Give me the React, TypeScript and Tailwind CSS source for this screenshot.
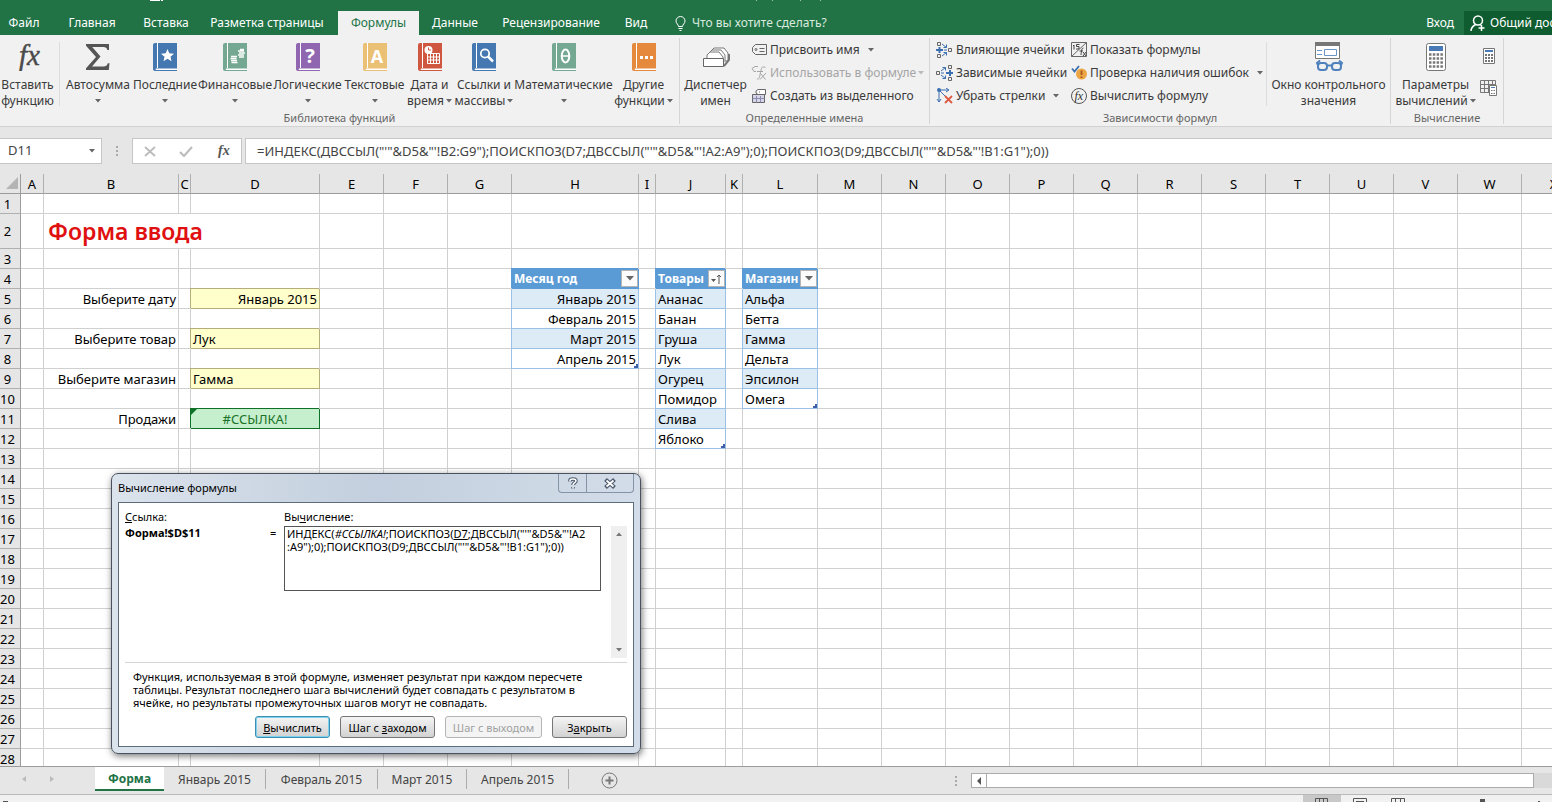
import { useState, type ReactNode } from "react";

const FORMULA =
  "=ИНДЕКС(ДВССЫЛ(\"'\"&D5&\"'!B2:G9\");ПОИСКПОЗ(D7;ДВССЫЛ(\"'\"&D5&\"'!A2:A9\");0);ПОИСКПОЗ(D9;ДВССЫЛ(\"'\"&D5&\"'!B1:G1\");0))";

const tabs = [
  { label: "Файл", width: "w-12" },
  { label: "Главная", width: "w-[88px]" },
  { label: "Вставка", width: "w-[60px]" },
  { label: "Разметка страницы", width: "w-[142px]" },
  { label: "Формулы", width: "w-[81px]" },
  { label: "Данные", width: "w-[72px]" },
  { label: "Рецензирование", width: "w-[120px]" },
  { label: "Вид", width: "w-[50px]" },
];

const columns = [
  { name: "A", width: 23 },
  { name: "B", width: 135 },
  { name: "C", width: 12 },
  { name: "D", width: 129 },
  { name: "E", width: 64 },
  { name: "F", width: 64 },
  { name: "G", width: 64 },
  { name: "H", width: 127 },
  { name: "I", width: 17 },
  { name: "J", width: 70 },
  { name: "K", width: 17 },
  { name: "L", width: 75 },
  ..."MNOPQRSTUVWXYZ".split("").map((name) => ({ name, width: 64 })),
];

const ROWS = 40;

interface Cell {
  text: string;
  kind: "label" | "input" | "inputRight" | "result" | "head" | "odd" | "even";
  right?: boolean;
  last?: boolean;
  sorted?: boolean;
}

const cells: Record<string, Cell> = {
  B5: { text: "Выберите дату", kind: "label" },
  B7: { text: "Выберите товар", kind: "label" },
  B9: { text: "Выберите магазин", kind: "label" },
  B11: { text: "Продажи", kind: "label" },
  D5: { text: "Январь 2015", kind: "inputRight" },
  D7: { text: "Лук", kind: "input" },
  D9: { text: "Гамма", kind: "input" },
  D11: { text: "#ССЫЛКА!", kind: "result" },
};

// Adds a formatted list (header + banded rows) starting at row 4
const addList = (col: string, head: string, items: string[], right = false) => {
  cells[`${col}4`] = { text: head, kind: "head", sorted: col === "J" };
  items.forEach((text, i) => {
    cells[`${col}${i + 5}`] = {
      text,
      kind: i % 2 === 0 ? "odd" : "even",
      right,
      last: i === items.length - 1,
    };
  });
};

addList("H", "Месяц год", ["Январь 2015", "Февраль 2015", "Март 2015", "Апрель 2015"], true);
addList("J", "Товары", ["Ананас", "Банан", "Груша", "Лук", "Огурец", "Помидор", "Слива", "Яблоко"]);
addList("L", "Магазин", ["Альфа", "Бетта", "Гамма", "Дельта", "Эпсилон", "Омега"]);

const kindClass: Record<Cell["kind"], string> = {
  label: "border-[#d0d0d0] text-right",
  input: "border-[#b5ae7c] bg-[#ffffcc] shadow-[-1px_-1px_0_#b5ae7c]",
  inputRight: "border-[#b5ae7c] bg-[#ffffcc] text-right shadow-[-1px_-1px_0_#b5ae7c]",
  result:
    "border-[#0f7028] bg-[#c6efce] text-center text-[#1b7328] shadow-[-1px_-1px_0_#0f7028]",
  head: "border-[#5b9bd5] bg-[#5b9bd5] text-[12px] font-bold text-white shadow-[-1px_-1px_0_#5b9bd5]",
  odd: "border-[#9bc2e6] bg-[#ddebf7] shadow-[-1px_0_0_#9bc2e6]",
  even: "border-[#9bc2e6] bg-white shadow-[-1px_0_0_#9bc2e6]",
};

const Arrow = ({ className = "text-[#666]" }: { className?: string }) => (
  <svg width="6" height="4" viewBox="0 0 6 4" className={`inline-block shrink-0 ${className}`}>
    <path d="M0 0h6L3 3.500z" fill="currentColor" />
  </svg>
);

/* ---------- Ribbon icons ---------- */

const Book = ({ color, children }: { color: string; children: ReactNode }) => (
  <svg width="24" height="28" viewBox="0 0 24 28">
    <path d="M2 0h22v28H2a2 2 0 0 1-2-2V2a2 2 0 0 1 2-2z" fill={color} />
    <path d="M4.500 0v25" stroke="#fff" />
    <path d="M24 25.500H3a1 1 0 0 0 0 1.500h21z" fill="#fff" />
    {children}
  </svg>
);

const FxIcon = () => (
  <svg width="26" height="28" viewBox="0 0 26 28" className='font-["Liberation_Serif",serif] italic'>
    <text x="4" y="22" fontSize="29" fill="#4a4a4a" stroke="#4a4a4a" strokeWidth=".4">
      fx
    </text>
  </svg>
);

const SigmaIcon = () => (
  <svg width="26" height="28" viewBox="0 0 26 28">
    <path
      d="M1 1h23v6h-1.700c-.5-2.300-1.500-3-4-3H7.200L15.500 13.500 7 23.500h11.500c2.500 0 3.500-1 4.300-3.300h1.700l-.7 6.800H1v-1.700L11 14 1 2.700z"
      fill="#555"
    />
  </svg>
);

const TagManagerIcon = () => (
  <svg width="28" height="28" viewBox="0 0 28 28" fill="#fff" stroke="#777">
    <path d="M9 14V8l3-3h10l4 5v8h-5" />
    <path d="M7 14v-4l3-3h9l4 5v6" />
    <path d="M5 16v-4l3-3h9l4 5v5" />
    <path d="M1.500 15.500h20v8h-20z" stroke="#666" />
    <path d="m22 23 5-6v-6" fill="none" strokeWidth="2" />
  </svg>
);

const NameTagIcon = () => (
  <svg width="17" height="16" viewBox="0 0 17 16" fill="none" stroke="#666">
    <path d="M4.500 2.500h11v10h-11l-3-3v-4z" />
    <path d="M8.500 6.500h5M8.500 9.500h5" />
    <circle cx="5" cy="7.500" r="1" />
  </svg>
);

const UseInFormulaIcon = () => (
  <svg width="17" height="16" viewBox="0 0 17 16" fill="none" stroke="#a5a5a5">
    <path d="M7 1.500H4l-3 2 2 3h2" />
    <path d="M14.500 2.500c-4-2-4 1-5 5s-1 7-3.500 6.500M6 6.500h6" />
    <path d="m9.500 8.500 5 6m.5-6.500-6 6.500" />
  </svg>
);

const CreateFromIcon = () => (
  <svg width="17" height="16" viewBox="0 0 17 16" fill="none" stroke="#666">
    <path d="M1.500 6.500h12v8h-12z" fill="#d6d6ea" />
    <path d="M1.500 10.500h12M5.500 8v6.500M9.500 8v6.500" stroke="#8c8cae" />
    <path d="M7 1.500h7.500v5H7l-2-1.500V3z" fill="#fff" />
    <path d="M8 4h1" />
  </svg>
);

const PrecedentsIcon = () => (
  <svg width="18" height="16" viewBox="0 0 18 16" fill="none">
    <path d="M1.500.500h3v3h-3zM1.500 12.500h3v3h-3zM12.500 6.500h3v3h-3z" stroke="#666" />
    <path d="M0 8h7M3.500 5v6" stroke="#3b6fb0" strokeWidth="2" />
    <path d="m6 2 4.500 3.500m0-3v3H7.500M6 14l4.500-3.500m-3 0h3v3M8 8h3" stroke="#3b6fb0" />
  </svg>
);

const DependentsIcon = () => (
  <svg width="18" height="16" viewBox="0 0 18 16" fill="none">
    <path d="M12.500.500h3v3h-3zM12.500 12.500h3v3h-3zM.500 6.500h3v3h-3z" stroke="#666" />
    <path d="M10 8h7M14 5v6" stroke="#3b6fb0" strokeWidth="2" />
    <path d="m5 6 4.500-3.500m-3 0h3v3M5 10l4.500 3.500m0-3v3h-3M5 8h3" stroke="#3b6fb0" />
  </svg>
);

const RemoveArrowsIcon = () => (
  <svg width="18" height="16" viewBox="0 0 18 16" fill="none">
    <path d="M3 2v12M3 2h9M3 2l8 8M10 0l3 2-3 2M1 11l2 3 2-3" stroke="#3b6fb0" />
    <circle cx="3" cy="2" r="2" fill="#3b6fb0" />
    <path d="m9 8 7 7m0-7-7 7" stroke="#dd5a43" strokeWidth="1.800" />
  </svg>
);

const ShowFormulasIcon = () => (
  <svg width="17" height="16" viewBox="0 0 17 16" fill="none" stroke="#666">
    <path d="M.500.500h15v14H.500zM15.500.500l-15 14" />
    <path d="M3 3v4.500M2 3.500h1M8.500 2.500h-3v2h2.500v2.500H5" stroke="#444" />
    <path d="M12.500 6c-2 0-2 3-2.500 7M8.500 9h3.500m0 1 3 4m0-4-3 4" stroke="#444" />
  </svg>
);

const ErrorCheckIcon = () => (
  <svg width="17" height="16" viewBox="0 0 17 16">
    <circle cx="10.500" cy="9" r="5.500" fill="#eda645" />
    <path d="M10.500 5.500V10m0 1.500V13" stroke="#a5561a" strokeWidth="1.800" />
    <path d="m1 3.500 2.500 3L8 1" fill="none" stroke="#3b6fb0" strokeWidth="1.800" />
  </svg>
);

const EvaluateIcon = () => (
  <svg width="17" height="16" viewBox="0 0 17 16" className='font-["Liberation_Serif",serif] italic'>
    <circle cx="8" cy="8" r="7.500" fill="none" stroke="#555" />
    <text x="3.500" y="12" fontSize="12" fill="#333">
      fx
    </text>
  </svg>
);

const WatchIcon = () => (
  <svg width="30" height="30" viewBox="0 0 30 30" fill="none">
    <path d="M1.500.500h24v16h-24z" fill="#fff" stroke="#777" />
    <path d="M1 0h25v4H1z" fill="#777" />
    <path d="M3 8.500h5M3 12.500h5" stroke="#6a93c8" />
    <path d="M10.500 7.500h12v6h-12z" stroke="#6a93c8" />
    <path d="M4 17h24v13H4z" fill="#f1f1f1" />
    <g stroke="#4f81bd" strokeWidth="2">
      <rect x="4" y="21" width="9" height="7" rx="3" />
      <rect x="18" y="21" width="9" height="7" rx="3" />
      <path d="M13 23.500h5M4 23l-1-2 3-2.500M27 23l1-2-3-2.500" />
    </g>
  </svg>
);

const CalculatorIcon = ({ size }: { size: "big" | "small" }) => (
  <svg
    width={size === "big" ? 20 : 12}
    height={size === "big" ? 28 : 16}
    viewBox={size === "big" ? "0 0 20 28" : "0 0 12 16"}
    fill="none"
    stroke="#777"
  >
    {size === "big" ? (
      <>
        <rect x=".5" y=".5" width="19" height="27" rx="2" fill="#fff" />
        <path d="M3 3h14v5H3z" fill="#4a7ab5" stroke="none" />
        <path
          d="M3 11.500h14M3 15.500h14M3 19.500h14M3 23.500h14"
          strokeWidth="2.500"
          strokeDasharray="2.500 1.300"
        />
      </>
    ) : (
      <>
        <path d="M.500.500h11v15H.500z" fill="#fff" />
        <path d="M2 2h8v2H2z" fill="#4a7ab5" stroke="none" />
        <path d="M2 7h8M2 10h8M2 13h8" strokeWidth="2" strokeDasharray="2 1" />
      </>
    )}
  </svg>
);

const CalcSheetIcon = () => (
  <svg width="17" height="16" viewBox="0 0 17 16" fill="none" stroke="#777">
    <path d="M.500.500h15v12H.500zM.500 4.500h15M.500 8.500h15M4.500.500v12M8.500.500v12M12.500.500v12" />
    <path d="M9.500 5.500h7v10h-7z" fill="#fff" />
    <path d="M11 7.500h4" stroke="#4a7ab5" />
    <path d="M11 10.500h4M11 13.500h4" strokeDasharray="1 .5" />
  </svg>
);

/* ---------- Ribbon parts ---------- */

interface BigButtonProps {
  icon: ReactNode;
  lines: [string, string?];
  width: string;
  arrow?: boolean;
}

const BigButton = ({ icon, lines, width, arrow = true }: BigButtonProps) => (
  <button type="button" className={`flex shrink-0 flex-col items-center pt-[3px] text-[12px] leading-4 ${width}`}>
    <span className="flex h-8 items-center">{icon}</span>
    <span className="whitespace-nowrap pt-1">{lines[0]}</span>
    <span className="flex h-4 items-center gap-0.5 whitespace-nowrap">
      {lines[1]}
      {arrow && <Arrow />}
    </span>
  </button>
);

interface SmallButtonProps {
  icon: ReactNode;
  label: string;
  arrow?: boolean;
  disabled?: boolean;
}

const SmallButton = ({ icon, label, arrow, disabled }: SmallButtonProps) => (
  <button
    type="button"
    disabled={disabled}
    className="flex h-[23px] items-center gap-0.5 whitespace-nowrap text-[12px] text-[#3a3a3a] disabled:text-[#a5a5a5]"
  >
    {icon}
    {label}
    {arrow && <Arrow className={disabled ? "text-[#bbb]" : "ml-1.5 text-[#666]"} />}
  </button>
);

const Group = ({ label, width, children }: { label: string; width: string; children: ReactNode }) => (
  <section
    aria-label={label}
    className={`mb-0.5 mt-[3px] flex shrink-0 flex-col justify-between border-r border-[#d5d5d5] ${width}`}
  >
    <div className="flex">{children}</div>
    <p className="text-center text-[11px] leading-3 text-[#666]">{label}</p>
  </section>
);

const Ribbon = () => (
  <div className="flex h-[92px] shrink-0 overflow-hidden border-b border-[#d2d2d2] bg-[#f1f1f1] text-[#3a3a3a]">
    <Group label="Библиотека функций" width="w-[680px]">
      <BigButton icon={<FxIcon />} lines={["Вставить", "функцию"]} width="w-[55px]" arrow={false} />
      <div className="mx-1 mt-1 h-16 border-r border-[#dcdcdc]" />
      <BigButton icon={<SigmaIcon />} lines={["Автосумма"]} width="w-[68px]" />
      <BigButton
        icon={
          <Book color="#4577b0">
            <path d="m14.500 6 1.800 4.300 4.700.4-3.500 3 1 4.600-4-2.500-4 2.500 1-4.600-3.500-3 4.700-.4z" fill="#fff" />
          </Book>
        }
        lines={["Последние"]}
        width="w-[66px]"
      />
      <BigButton
        icon={
          <Book color="#74a892">
            <g stroke="#fff" strokeWidth="1.300">
              <path d="M8 13.500h6M7.500 15.500h6M8 17.500h6M8.500 19.500h6M15 8h6M16 10h6M15 12h6M16 14h5M17 6.500h4" />
            </g>
          </Book>
        }
        lines={["Финансовые"]}
        width="w-[74px]"
      />
      <BigButton
        icon={
          <Book color="#9166b0">
            <text x="14" y="20" textAnchor="middle" fontSize="20" fontWeight="700" fill="#fff">
              ?
            </text>
          </Book>
        }
        lines={["Логические"]}
        width="w-[71px]"
      />
      <BigButton
        icon={
          <Book color="#eac074">
            <text x="14" y="20" textAnchor="middle" fontSize="18" fontWeight="700" fill="#fff">
              A
            </text>
          </Book>
        }
        lines={["Текстовые"]}
        width="w-[63px]"
      />
      <BigButton
        icon={
          <Book color="#d0573f">
            <path d="M9.500 10.500h12v10h-12zM9.500 14h12M9.500 17h12M12.500 10.500v10M15.500 10.500v10M18.500 10.500v10" stroke="#fff" fill="none" />
            <circle cx="10.500" cy="7" r="4" fill="#fff" />
            <path d="M10.500 4.500V7H13" stroke="#d0573f" fill="none" />
          </Book>
        }
        lines={["Дата и", "время"]}
        width="w-[47px]"
      />
      <BigButton
        icon={
          <Book color="#4577b0">
            <circle cx="13" cy="10.500" r="4.200" fill="none" stroke="#fff" strokeWidth="1.800" />
            <path d="m16 13.500 5 5" stroke="#fff" strokeWidth="2.500" />
          </Book>
        }
        lines={["Ссылки и", "массивы"]}
        width="w-[62px]"
      />
      <BigButton
        icon={
          <Book color="#74a892">
            <ellipse cx="13.500" cy="13" rx="3.800" ry="6.500" fill="none" stroke="#fff" strokeWidth="2" />
            <path d="M10 13h7" stroke="#fff" strokeWidth="1.500" />
          </Book>
        }
        lines={["Математические"]}
        width="w-[97px]"
      />
      <BigButton
        icon={
          <Book color="#e58a3c">
            <path d="M8 13h3v3H8zM13 13h3v3h-3zM18 13h3v3h-3z" fill="#fff" />
          </Book>
        }
        lines={["Другие", "функции"]}
        width="w-[63px]"
      />
    </Group>

    <Group label="Определенные имена" width="w-[250px]">
      <BigButton icon={<TagManagerIcon />} lines={["Диспетчер", "имен"]} width="w-[71px]" arrow={false} />
      <div>
        <SmallButton icon={<NameTagIcon />} label="Присвоить имя" arrow />
        <SmallButton icon={<UseInFormulaIcon />} label="Использовать в формуле" arrow disabled />
        <SmallButton icon={<CreateFromIcon />} label="Создать из выделенного" />
      </div>
    </Group>

    <Group label="Зависимости формул" width="w-[461px]">
      <div className="w-[141px] shrink-0 pl-1.5">
        <SmallButton icon={<PrecedentsIcon />} label="Влияющие ячейки" />
        <SmallButton icon={<DependentsIcon />} label="Зависимые ячейки" />
        <SmallButton icon={<RemoveArrowsIcon />} label="Убрать стрелки" arrow />
      </div>
      <div className="w-[195px] shrink-0">
        <SmallButton icon={<ShowFormulasIcon />} label="Показать формулы" />
        <SmallButton icon={<ErrorCheckIcon />} label="Проверка наличия ошибок" arrow />
        <SmallButton icon={<EvaluateIcon />} label="Вычислить формулу" />
      </div>
      <div className="mt-1 h-16 border-r border-[#dcdcdc]" />
      <BigButton icon={<WatchIcon />} lines={["Окно контрольного", "значения"]} width="w-[123px]" arrow={false} />
    </Group>

    <Group label="Вычисление" width="w-[113px]">
      <BigButton icon={<CalculatorIcon size="big" />} lines={["Параметры", "вычислений"]} width="w-[89px]" />
      <div className="flex flex-col items-center gap-4 pt-2.5">
        <button type="button" aria-label="Пересчет">
          <CalculatorIcon size="small" />
        </button>
        <button type="button" aria-label="Произвести вычисления">
          <CalcSheetIcon />
        </button>
      </div>
    </Group>
  </div>
);

const TitleAndTabs = () => {
  const [active, setActive] = useState("Формулы");
  return (
    <header className="shrink-0 bg-[#217346] text-white">
      <div className="h-[11px] overflow-hidden pl-[150px]">
        <svg width="700" height="3" viewBox="0 0 700 3">
          <path d="M0 0h10v1H0zM11 0h2v1h-2z" fill="#fff" />
          <path d="M606 0h1v1h-1zM622 0h1v1h-1zM650 0h1v1h-1zM670 0h1v1h-1z" fill="#9dc4ae" />
        </svg>
      </div>
      <div className="flex h-6 items-stretch justify-between overflow-hidden text-[12px]">
        <nav className="flex shrink-0">
          {tabs.map((tab) => (
            <button
              key={tab.label}
              type="button"
              onClick={() => setActive(tab.label)}
              className={`shrink-0 whitespace-nowrap ${tab.width} ${
                active === tab.label ? "bg-[#f1f1f1] text-[#217346]" : ""
              }`}
            >
              {tab.label}
            </button>
          ))}
          <button type="button" className="flex items-center gap-1.5 pl-3.5 text-[#d9eadf]">
            <svg width="11" height="15" viewBox="0 0 11 15" fill="none" stroke="#fff">
              <path d="M3.500 10.500c0-2-2.500-3-2.500-5.500a4.500 4.500 0 0 1 9 0c0 2.500-2.500 3.500-2.500 5.500zM3.500 12.500h4M4.500 14.500h2" />
            </svg>
            Что вы хотите сделать?
          </button>
        </nav>
        <div className="flex">
          <button type="button" className="px-2.5">
            Вход
          </button>
          <button type="button" className="flex w-[88px] items-center gap-1 overflow-hidden whitespace-nowrap bg-[#0e5c2f] pl-1.5">
            <svg width="16" height="17" viewBox="0 0 16 17" fill="none" stroke="#fff" strokeWidth="1.500" className="shrink-0">
              <circle cx="8" cy="5.500" r="4.500" />
              <path d="M1 16c0-3 2-5 4.500-6.500M10 9.500l2 1.500M8.500 13h6M11.500 10v6" />
            </svg>
            Общий доступ
          </button>
        </div>
      </div>
    </header>
  );
};

const FormulaBar = () => (
  <div className="flex h-[47px] shrink-0 items-start bg-[#e6e6e6] pt-[11px] text-[13px] text-[#444]">
    <div className="flex h-[26px] w-[102px] shrink-0 items-center border border-l-0 border-[#c6c6c6] bg-white pr-1.5">
      <input aria-label="Имя" defaultValue="D11" className="w-full min-w-0 pl-2 outline-none" />
      <Arrow />
    </div>
    <div className="flex h-[26px] w-[30px] shrink-0 flex-col items-center justify-center gap-0.5">
      <span className="size-0.5 bg-[#aaa]" />
      <span className="size-0.5 bg-[#aaa]" />
      <span className="size-0.5 bg-[#aaa]" />
    </div>
    <div className="mr-[3px] flex h-[26px] w-[110px] shrink-0 items-center justify-around border border-[#c6c6c6] bg-white">
      <button type="button" aria-label="Отмена">
        <svg width="12" height="11" viewBox="0 0 12 11">
          <path d="m1 1 10 9M11 1 1 10" stroke="#bbb" strokeWidth="1.800" />
        </svg>
      </button>
      <button type="button" aria-label="Ввод">
        <svg width="14" height="11" viewBox="0 0 14 11">
          <path d="m1 6 4 4 8-9" fill="none" stroke="#bbb" strokeWidth="2" />
        </svg>
      </button>
      <button type="button" aria-label="Вставить функцию">
        <svg width="14" height="15" viewBox="0 0 14 15" className='font-["Liberation_Serif",serif] italic'>
          <text x="2" y="11" fontSize="14" fontWeight="700" fill="#555">
            fx
          </text>
        </svg>
      </button>
    </div>
    <input
      aria-label="Строка формул"
      defaultValue={FORMULA}
      className="h-[26px] min-w-0 flex-1 border border-r-0 border-[#c6c6c6] bg-white pl-[11px] outline-none"
    />
  </div>
);

/* ---------- Sheet ---------- */

const CellContent = ({ cell }: { cell: Cell }) => (
  <>
    {cell.kind === "head" ? (
      <div className="flex items-center justify-between">
        <span>{cell.text}</span>
        <button
          type="button"
          aria-label={`Фильтр: ${cell.text}`}
          className="flex h-[17px] w-[17px] shrink-0 items-center justify-center border border-[#b5b5b5] bg-[#fcfcfc]"
        >
          {cell.sorted ? (
            <svg width="11" height="10" viewBox="0 0 11 10">
              <path d="M0 5h5L2.500 8z" fill="#555" />
              <path d="M8 10V1M6 3l2-2 2 2" fill="none" stroke="#555" />
            </svg>
          ) : (
            <svg width="8" height="5" viewBox="0 0 8 5">
              <path d="M0 0h8L4 4.500z" fill="#666" />
            </svg>
          )}
        </button>
      </div>
    ) : (
      cell.text
    )}
    {cell.last && (
      <svg width="4" height="4" viewBox="0 0 4 4" className="absolute bottom-0 right-0">
        <path d="M4 0v4H0V2h2V0z" fill="#3f5fa8" />
      </svg>
    )}
    {cell.kind === "result" && (
      <svg width="6" height="6" viewBox="0 0 6 6" className="absolute left-0 top-0">
        <path d="M0 0h6L0 6z" fill="#0f7028" />
      </svg>
    )}
  </>
);

const Sheet = () => (
  <table className="w-0 table-fixed border-separate border-spacing-0 text-[13px] leading-[18px] text-black">
    <colgroup>
      <col className="w-[21px]" />
      {columns.map((c) => (
        <col key={c.name} style={{ width: c.width }} />
      ))}
    </colgroup>
    <thead>
      <tr className="h-5 bg-[#e6e6e6]">
        <th className="border-b border-r border-[#9c9c9c] p-0">
          <svg width="13" height="13" viewBox="0 0 13 13" className="ml-1.5">
            <path d="M12 0v12H0z" fill="#b4b4b4" />
          </svg>
        </th>
        {columns.map((c) => (
          <th key={c.name} scope="col" className="border-b border-r border-b-[#9c9c9c] border-r-[#b0b0b0] p-0 font-normal">
            {c.name}
          </th>
        ))}
      </tr>
    </thead>
    <tbody>
      {Array.from({ length: ROWS }, (_, i) => i + 1).map((row) => (
        <tr key={row} className={row === 2 ? "h-[35px]" : "h-5"}>
          <th
            scope="row"
            className="border-b border-r border-b-[#b0b0b0] border-r-[#9c9c9c] bg-[#e6e6e6] p-0 pr-[5px] text-center font-normal"
          >
            {row}
          </th>
          {columns.map((c) => {
            if (row === 2 && c.name === "B") {
              return (
                <td
                  key={c.name}
                  colSpan={3}
                  className="border-b border-r border-[#d0d0d0] p-0 pl-1 text-[23px] font-semibold text-[#e01010]"
                >
                  Форма ввода
                </td>
              );
            }
            if (row === 2 && (c.name === "C" || c.name === "D")) return null;
            const cell = cells[`${c.name}${row}`];
            if (!cell) return <td key={c.name} className="border-b border-r border-[#d0d0d0] p-0" />;
            return (
              <td
                key={c.name}
                className={`relative whitespace-nowrap border-b border-r p-0 ${
                  cell.kind === "head" ? "pl-0.5" : "px-0.5"
                } ${cell.right ? "text-right" : ""} ${kindClass[cell.kind]}`}
              >
                <CellContent cell={cell} />
              </td>
            );
          })}
        </tr>
      ))}
    </tbody>
  </table>
);

/* ---------- Evaluate formula dialog ---------- */

const DialogButton = ({
  children,
  width,
  main,
  disabled,
}: {
  children: ReactNode;
  width: string;
  main?: boolean;
  disabled?: boolean;
}) => (
  <button
    type="button"
    disabled={disabled}
    className={`h-[22px] whitespace-nowrap rounded-[3px] border bg-linear-to-b from-[#f4f4f4] to-[#d2d2d2] disabled:border-[#b5b5b5] disabled:from-[#f4f4f4] disabled:to-[#f4f4f4] disabled:text-[#a0a0a0] ${width} ${
      main ? "border-[#3c8fb0] shadow-[inset_0_0_0_1px_#7fd3ee]" : "border-[#767676]"
    }`}
  >
    {children}
  </button>
);

const EvaluateDialog = () => (
  <div
    role="dialog"
    aria-labelledby="evaluate-title"
    className="absolute left-[111px] top-[299px] w-[530px] rounded-[7px] border border-[#4a5260] bg-linear-to-r from-[#dbe3ec] via-[#c3cfde] to-[#d3dde9] px-1.5 pb-1.5 text-[11px] leading-[13px] text-black shadow-[1px_2px_7px_rgba(0,0,0,0.55)]"
  >
    <div className="flex h-7 items-start justify-between">
      <h2 id="evaluate-title" className="pt-[7px]">
        Вычисление формулы
      </h2>
      <div className="flex h-[19px] overflow-hidden rounded-b-[4px] border border-t-0 border-[#8593a6]">
        <button type="button" aria-label="Справка" className="flex w-7 items-center justify-center border-r border-[#8593a6]">
          <svg width="10" height="13" viewBox="0 0 10 13" fill="none">
            <path d="M2 4.500V3.500C2 2 3.500 2 5 2s3 .5 3 2-3 2-3 4M5 10v1.500" stroke="#4d5a6b" strokeWidth="3.600" />
            <path d="M2 4.500V3.500C2 2 3.500 2 5 2s3 .5 3 2-3 2-3 4M5 10v1.500" stroke="#fff" strokeWidth="1.500" />
          </svg>
        </button>
        <button type="button" aria-label="Закрыть окно" className="flex w-[46px] items-center justify-center">
          <svg width="12" height="11" viewBox="0 0 12 11">
            <path d="m1.500 1.500 9 8m0-8-9 8" stroke="#4d5a6b" strokeWidth="4" />
            <path d="m2.500 2.500 7 6m0-6-7 6" stroke="#fff" strokeWidth="1.800" />
          </svg>
        </button>
      </div>
    </div>
    <div className="border border-[#5d6b7d] bg-white px-1.5 pb-2">
      <div className="flex h-40 border-b border-[#d5d5d5] pt-[7px]">
        <div className="w-[145px] shrink-0">
          <p>
            <u>С</u>сылка:
          </p>
          <p className="pt-[3px] font-bold">Форма!$D$11</p>
        </div>
        <p className="w-3.5 shrink-0 pt-4">=</p>
        <div className="min-w-0 flex-1">
          <p id="evaluation-label">
            Вы<u>ч</u>исление:
          </p>
          <div
            role="textbox"
            aria-readonly="true"
            aria-labelledby="evaluation-label"
            className="mr-2.5 mt-[3px] h-[65px] whitespace-nowrap border border-[#555] px-0.5"
          >
            ИНДЕКС(<i>#ССЫЛКА!</i>;ПОИСКПОЗ(<u>D7</u>;ДВССЫЛ("'"&amp;D5&amp;"'!A2
            <br />
            :A9");0);ПОИСКПОЗ(D9;ДВССЫЛ("'"&amp;D5&amp;"'!B1:G1");0))
          </div>
        </div>
        <div className="mb-1 mt-4 flex w-4 shrink-0 flex-col items-center justify-between bg-[#efefef] py-1.5">
          <Arrow className="rotate-180 text-[#777]" />
          <Arrow className="text-[#777]" />
        </div>
      </div>
      <p className="px-2 pt-[7px]">
        Функция, используемая в этой формуле, изменяет результат при каждом пересчете
        <br />
        таблицы. Результат последнего шага вычислений будет совпадать с результатом в
        <br />
        ячейке, но результаты промежуточных шагов могут не совпадать.
      </p>
      <div className="flex justify-end gap-2.5 pt-[7px]">
        <DialogButton width="w-[75px]" main>
          <u>В</u>ычислить
        </DialogButton>
        <DialogButton width="w-[95px]">
          Шаг с <u>з</u>аходом
        </DialogButton>
        <DialogButton width="w-[97px]" disabled>
          Шаг с выходом
        </DialogButton>
        <DialogButton width="w-[75px]">
          З<u>а</u>крыть
        </DialogButton>
      </div>
    </div>
  </div>
);

/* ---------- Bottom bars ---------- */

const sheets = [
  { name: "Январь 2015", width: "w-[102px]" },
  { name: "Февраль 2015", width: "w-[112px]" },
  { name: "Март 2015", width: "w-[89px]" },
  { name: "Апрель 2015", width: "w-[102px]" },
];

const SheetTabs = () => (
  <div className="flex h-7 shrink-0 items-start justify-between border-t border-[#9c9c9c] bg-[#e6e6e6] text-[12px] text-[#444]">
    <div className="flex shrink-0 items-center">
      <div className="flex w-[95px] items-center gap-6 pl-[22px]">
        <svg width="4" height="6" viewBox="0 0 4 6">
          <path d="M4 0v6L0 3z" fill="#bbb" />
        </svg>
        <svg width="4" height="6" viewBox="0 0 4 6">
          <path d="M0 0v6l4-3z" fill="#bbb" />
        </svg>
      </div>
      <button type="button" className="h-6 w-[69px] border-b-2 border-[#217346] bg-white pt-0.5 font-bold text-[#217346]">
        Форма
      </button>
      {sheets.map((sheet) => (
        <button key={sheet.name} type="button" className={`h-5 whitespace-nowrap border-r border-[#ababab] pt-0.5 ${sheet.width}`}>
          {sheet.name}
        </button>
      ))}
      <button type="button" aria-label="Новый лист" className="ml-8 pt-0.5">
        <svg width="17" height="17" viewBox="0 0 17 17" fill="none" stroke="#777">
          <circle cx="8.500" cy="8.500" r="7.500" />
          <path d="M4.500 8.500h8M8.500 4.500v8" strokeWidth="2" />
        </svg>
      </button>
    </div>
    <div className="flex w-[597px] items-center pt-1.5">
      <div className="flex w-2 shrink-0 flex-col gap-0.5">
        <span className="size-0.5 bg-[#aaa]" />
        <span className="size-0.5 bg-[#aaa]" />
        <span className="size-0.5 bg-[#aaa]" />
      </div>
      <button
        type="button"
        aria-label="Прокрутить влево"
        className="ml-2 flex h-[15px] w-4 shrink-0 items-center justify-center border border-[#ababab] bg-white"
      >
        <svg width="4" height="8" viewBox="0 0 4 8">
          <path d="M4 0v8L0 4z" fill="#555" />
        </svg>
      </button>
      <div className="h-[15px] flex-1 border border-l-0 border-[#ababab] bg-white" />
      <div className="h-[15px] w-[18px] bg-[#d9d9d9]" />
    </div>
  </div>
);

const StatusBar = () => (
  <footer className="flex h-2 shrink-0 items-start justify-between overflow-hidden border-t border-[#b8b8b8] bg-[#f1f1f1] text-[#444]">
    <svg width="12" height="8" viewBox="0 0 12 8">
      <path d="M3 6h5v1H3z" fill="#555" />
    </svg>
    <div className="flex pr-3">
      <svg width="240" height="8" viewBox="0 0 240 8" fill="none" stroke="#555">
        <path d="M3 0h38v8H3z" fill="#c8c8c8" stroke="none" />
        <path d="M15.500 8V3.500h12V8M19.500 4v4M23.500 4v4M53.500 8V3.500h13V8M56 6.500h8M91.500 8V3.500h13V8M95.500 4v4M100.500 4v4" />
        <path d="M180 4h5v4h-5zM238 6h2v2h-2z" fill="#555" stroke="none" />
      </svg>
    </div>
  </footer>
);

export default function App() {
  return (
    <div className='flex h-screen flex-col overflow-hidden bg-white font-["Noto_Sans","Open_Sans",sans-serif]'>
      <TitleAndTabs />
      <Ribbon />
      <FormulaBar />
      <main className="relative min-h-0 flex-1 overflow-hidden">
        <Sheet />
        <EvaluateDialog />
      </main>
      <SheetTabs />
      <StatusBar />
    </div>
  );
}
